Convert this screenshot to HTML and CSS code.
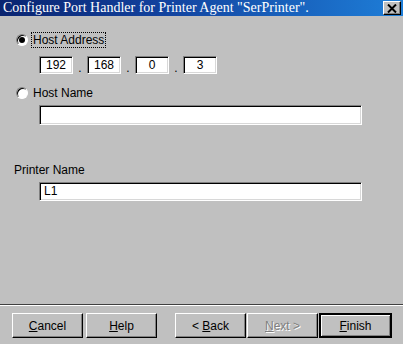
FILE: index.html
```html
<!DOCTYPE html>
<html lang="en">
<head>
    <meta charset="UTF-8">
    <title>Configure Port Handler</title>
    <link rel="stylesheet" href="styles.css">
</head>
<body>
    <div class="dialog">
        <div class="titlebar">
            <span class="title">Configure Port Handler for Printer Agent "SerPrinter".</span>
            <span class="close">
                <svg width="10" height="9" viewBox="0 0 10 9"><path d="M1 0.5 L9 8.5 M9 0.5 L1 8.5" stroke="#000" stroke-width="2"/></svg>
            </span>
        </div>

        <div class="pane">
            <div class="radio-row">
                <span class="radio checked"></span>
                <span class="label focus">Host Address</span>
            </div>
            <div class="ip-row">
                <span class="field ip">192</span><span class="dot">.</span>
                <span class="field ip">168</span><span class="dot">.</span>
                <span class="field ip">0</span><span class="dot">.</span>
                <span class="field ip">3</span>
            </div>

            <div class="radio-row second">
                <span class="radio"></span>
                <span class="label">Host Name</span>
            </div>
            <div class="field wide host"></div>

            <div class="caption">Printer Name</div>
            <div class="field wide printer">L1</div>
        </div>

        <div class="separator"></div>
        <div class="buttons">
            <button class="btn"><u>C</u>ancel</button>
            <button class="btn help"><u>H</u>elp</button>
            <button class="btn back">&lt; <u>B</u>ack</button>
            <button class="btn next" disabled><u>N</u>ext &gt;</button>
            <button class="btn finish"><u>F</u>inish</button>
        </div>
    </div>
</body>
</html>
```
FILE: styles.css
```css
body {
    margin: 0;
    font-family: "Liberation Sans", Arial, sans-serif;
    font-size: 12px;
    color: #000;
}

.dialog {
    width: 403px;
    height: 344px;
    background-color: #c0c0c0;
    display: flex;
    flex-direction: column;
}

.titlebar {
    height: 16px;
    background: linear-gradient(to right, #0a2470 0%, #12429e 40%, #1e7ed8 100%);
    display: flex;
    align-items: center;
    justify-content: space-between;
    padding: 0 2px 0 3px;
}

.title {
    font-family: "Liberation Serif", "Times New Roman", serif;
    font-size: 14px;
    line-height: 16px;
    color: #fff;
    white-space: nowrap;
}

.close {
    width: 18px;
    height: 14px;
    box-sizing: border-box;
    background-color: #c0c0c0;
    border: 1px solid;
    border-color: #fff #000 #000 #fff;
    box-shadow: inset -1px -1px #808080;
    display: flex;
    align-items: center;
    justify-content: center;
}

.pane {
    flex: 1;
    padding: 16px 0 0 14px;
}

.radio-row {
    display: flex;
    align-items: center;
    height: 16px;
    margin-left: 2px;
}

.radio-row.second {
    margin-top: 11px;
}

.radio {
    width: 12px;
    height: 12px;
    box-sizing: border-box;
    border-radius: 50%;
    background-color: #fff;
    border: 1px solid;
    border-color: #808080 #fff #fff #808080;
    box-shadow: inset 1px 1px #000;
    position: relative;
}

.radio.checked::after {
    content: "";
    position: absolute;
    left: 2px;
    top: 2px;
    width: 6px;
    height: 6px;
    border-radius: 50%;
    background-color: #000;
}

.label {
    margin-left: 3px;
    padding: 0 1px;
    line-height: 14px;
    border: 1px dotted transparent;
}

.label.focus {
    border-color: #000;
}

.ip-row {
    display: flex;
    align-items: flex-end;
    margin: 8px 0 0 25px;
    height: 18px;
}

.field {
    box-sizing: border-box;
    background-color: #fff;
    border: 1px solid;
    border-color: #808080 #fff #fff #808080;
    box-shadow: inset 1px 1px #000, inset -1px -1px #d8d8d8;
}

.ip {
    width: 34px;
    height: 18px;
    line-height: 16px;
    text-align: center;
}

.dot {
    width: 14px;
    text-align: center;
    line-height: 12px;
}

.wide {
    width: 323px;
    margin-left: 25px;
    padding-left: 4px;
}

.host {
    height: 20px;
    margin-top: 4px;
}

.caption {
    margin-top: 38px;
    line-height: 14px;
}

.printer {
    height: 19px;
    line-height: 17px;
    margin-top: 5px;
}

.separator {
    height: 1px;
    background-color: #404040;
    border-bottom: 1px solid #fff;
}

.buttons {
    display: flex;
    padding: 7px 0 6px 12px;
}

.btn {
    width: 71px;
    height: 25px;
    box-sizing: border-box;
    font-family: "Liberation Sans", Arial, sans-serif;
    font-size: 12px;
    color: #000;
    background-color: #c0c0c0;
    border: 1px solid;
    border-color: #fff #000 #000 #fff;
    box-shadow: inset -1px -1px #808080;
    padding: 0;
}

.help {
    margin-left: 3px;
}

.back {
    margin-left: 18px;
}

.next {
    margin-left: 1px;
    color: #808080;
    text-shadow: 1px 1px #fff;
}

.finish {
    margin-left: 1px;
    width: 73px;
    border: 2px solid;
    border-color: #000;
    box-shadow: inset 1px 1px #fff, inset -1px -1px #808080;
}
```
